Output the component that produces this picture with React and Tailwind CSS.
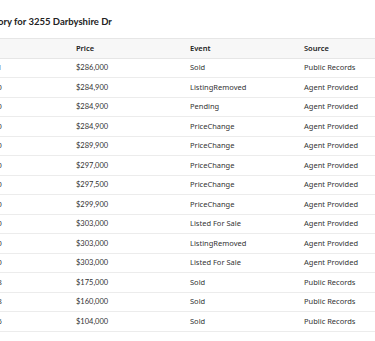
import React from 'react';

const rows = [
    { date: '06/25/2021', price: '$286,000', event: 'Sold', source: 'Public Records' },
    { date: '12/14/2020', price: '$284,900', event: 'ListingRemoved', source: 'Agent Provided' },
    { date: '11/02/2020', price: '$284,900', event: 'Pending', source: 'Agent Provided' },
    { date: '10/20/2020', price: '$284,900', event: 'PriceChange', source: 'Agent Provided' },
    { date: '09/06/2020', price: '$289,900', event: 'PriceChange', source: 'Agent Provided' },
    { date: '08/21/2020', price: '$297,000', event: 'PriceChange', source: 'Agent Provided' },
    { date: '07/07/2020', price: '$297,500', event: 'PriceChange', source: 'Agent Provided' },
    { date: '06/24/2020', price: '$299,900', event: 'PriceChange', source: 'Agent Provided' },
    { date: '05/10/2020', price: '$303,000', event: 'Listed For Sale', source: 'Agent Provided' },
    { date: '03/30/2020', price: '$303,000', event: 'ListingRemoved', source: 'Agent Provided' },
    { date: '02/15/2020', price: '$303,000', event: 'Listed For Sale', source: 'Agent Provided' },
    { date: '08/09/2018', price: '$175,000', event: 'Sold', source: 'Public Records' },
    { date: '04/17/2008', price: '$160,000', event: 'Sold', source: 'Public Records' },
    { date: '09/22/2006', price: '$104,000', event: 'Sold', source: 'Public Records' },
];

const App = () => {
    return (
        <div className="w-[375px] h-[341px] overflow-hidden bg-white text-[#333]" style={{ fontFamily: '"Noto Sans", sans-serif' }}>
            <div className="ml-[-44px] w-[456px] pt-[16px]">
                <h2
                    className="ml-[1px] h-[12px] leading-[12px] text-[9.5px] font-bold text-[#222] whitespace-nowrap mb-[10px]"
                    style={{ fontFamily: 'Lato, sans-serif' }}
                >
                    Price History for 3255 Darbyshire Dr
                </h2>
                <table className="w-[456px] table-fixed border-collapse">
                    <thead>
                        <tr className="h-[19.5px] bg-[#f7f7f7] border-t border-b border-[#e6e6e6]">
                            <th className="w-[114px] pl-[6px] text-left text-[7.5px] font-semibold text-[#222]">Date</th>
                            <th className="w-[114px] pl-[6px] text-left text-[7.5px] font-semibold text-[#222]">Price</th>
                            <th className="w-[114px] pl-[6px] text-left text-[7.5px] font-semibold text-[#222]">Event</th>
                            <th className="w-[114px] pl-[6px] text-left text-[7.5px] font-semibold text-[#222]">Source</th>
                        </tr>
                    </thead>
                    <tbody>
                        {rows.map((r, i) => (
                            <tr key={i} className="h-[19.5px] border-b border-[#ececec]">
                                <td className="pl-[6px] text-[7.5px] whitespace-nowrap">{r.date}</td>
                                <td className="pl-[6px] text-[7.5px] whitespace-nowrap" style={{ fontFamily: 'Lato, sans-serif' }}>{r.price}</td>
                                <td className="pl-[6px] text-[7.5px] whitespace-nowrap">{r.event}</td>
                                <td className="pl-[6px] text-[7.5px] whitespace-nowrap">{r.source}</td>
                            </tr>
                        ))}
                    </tbody>
                </table>
            </div>
        </div>
    );
};

export default App;
